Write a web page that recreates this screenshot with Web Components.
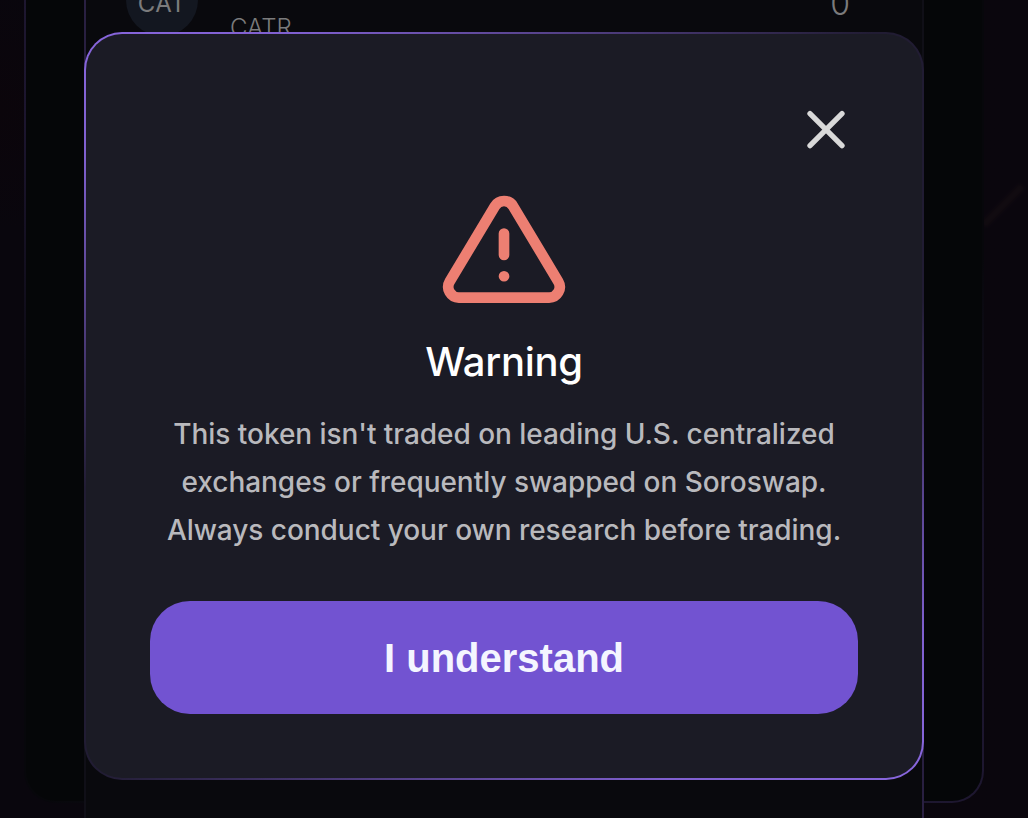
<!DOCTYPE html>
<html lang="en">
<head>
<meta charset="utf-8">
<title>Token warning</title>
<style>
html,body{margin:0;height:100%;overflow:hidden;background:#09060d}
body{font-family:Inter,"Liberation Sans",sans-serif}
</style>
</head>
<body>
<app-shell>
  <swap-panel slot="page">
    <token-row symbol="CAT" code="CATR" balance="0"></token-row>
  </swap-panel>
  <warning-modal slot="modal">
    <warning-icon slot="icon"></warning-icon>
    <span slot="title">Warning</span>
    <span slot="text">This token isn't traded on leading U.S. centralized<br>exchanges or frequently swapped on Soroswap.<br>Always conduct your own research before trading.</span>
    <primary-button slot="action">I understand</primary-button>
  </warning-modal>
</app-shell>
<script>
const define = (name, html) => {
  customElements.define(name, class extends HTMLElement {
    constructor() {
      super();
      const root = this.attachShadow({ mode: 'open' });
      root.innerHTML = html;
    }
    connectedCallback() {
      this.shadowRoot.querySelectorAll('[data-attr]').forEach(n => {
        n.textContent = this.getAttribute(n.dataset.attr);
      });
    }
  });
};

define('app-shell', `
<style>
:host{display:block;position:relative;width:1028px;height:818px;overflow:hidden;
  background:radial-gradient(circle at 0 110px,#0b050b 0,transparent 120px),linear-gradient(90deg,#09060d,#0a060d)}
.overlay{position:absolute;inset:0;display:flex;justify-content:center;align-items:flex-start;padding:32px 20px 0 0;box-sizing:border-box}
.streak{position:absolute;left:976px;top:202px;width:54px;height:7px;background:#110b10;transform:rotate(-45deg);filter:blur(1.5px)}
</style>
<div class="streak"></div>
<slot name="page"></slot>
<div class="overlay"><slot name="modal"></slot></div>`);

define('swap-panel', `
<style>
:host{display:block;position:relative}
.outer{box-sizing:border-box;width:960px;height:843px;margin:-40px 0 0 24px;padding:0 58px;border-radius:32px;border:2px solid transparent;
  background:linear-gradient(#050608,#050608) padding-box,linear-gradient(150deg,#1e1730 0%,#1c152e 12%,#07070b 36%,#07070b 61%,#19142a 80%,#1e1730 100%) border-box}
.inner{box-sizing:border-box;width:840px;height:900px;border:2px solid transparent;
  background:linear-gradient(#09090d,#09090d) padding-box,linear-gradient(150deg,#2b2144 0%,#261d3c 12%,#100f17 36%,#100f17 70%,#261d3c 88%,#2b2144 100%) border-box}
</style>
<div class="outer"><div class="inner"><slot></slot></div></div>`);

define('token-row', `
<style>
:host{display:flex;align-items:flex-start;padding:0 72px 0 40px;color:#7b7b7c}
.logo{box-sizing:border-box;width:72px;height:72px;border-radius:50%;background:#131720;display:flex;align-items:center;justify-content:center;padding-top:6px;font-size:24px;letter-spacing:.4px}
.code{margin:48px 0 0 32px;font-size:24px;line-height:32px;font-weight:300}
.bal{margin:20px 0 0 auto;font-size:32px;line-height:40px;font-weight:300}
</style>
<div class="logo" data-attr="symbol"></div><div class="code" data-attr="code"></div><div class="bal" data-attr="balance"></div>`);

define('warning-icon', `
<style>:host{display:block;width:128px;height:128px}svg{display:block}</style>
<svg width="128" height="128" viewBox="0 0.08 24 24" fill="none" stroke="#ed7f72" stroke-width="2" stroke-linecap="round" stroke-linejoin="round">
<path d="M10.29 3.86 1.82 18a2 2 0 0 0 1.71 3h16.94a2 2 0 0 0 1.71-3L13.71 3.86a2 2 0 0 0-3.42 0z"/><path d="M12 9v4M12 17h.01"/></svg>`);

define('close-icon', `
<style>:host{display:block;width:64px;height:64px}svg{display:block}</style>
<svg width="64" height="64" viewBox="0 0.15 24 24" fill="none" stroke="#d9d9d9" stroke-width="2" stroke-linecap="round"><path d="M18 6 6 18M6 6l12 12"/></svg>`);

define('primary-button', `
<style>
:host{display:block}
button{display:flex;align-items:center;justify-content:center;width:708px;height:113px;padding:0;border:0;border-radius:40px;background:#7253d1;color:#f4f5ff;
  font:bold 40px/46px "Liberation Sans",Arial,sans-serif}
</style>
<button><slot></slot></button>`);

define('warning-modal', `
<style>
:host{box-sizing:border-box;width:840px;height:748px;display:flex;flex-direction:column;align-items:center;padding:64px;border:2px solid transparent;border-radius:38px;
  background:linear-gradient(#1b1b25,#1b1b25) padding-box,linear-gradient(150deg,#8866dd 0%,#8060d0 10%,#211c33 37%,#211c33 61%,#8060d0 88%,#8866dd 100%) border-box}
close-icon{align-self:flex-end}
.icon{margin-top:24px}
h1{margin:24px 0 0;font-size:40px;line-height:48px;font-weight:500;letter-spacing:-.28px;color:#fff}
p{margin:24px 0 0;font-size:28px;line-height:48px;font-weight:500;letter-spacing:-.04px;color:#b9b9bd;text-align:center;white-space:nowrap}
.action{margin-top:auto}
</style>
<close-icon></close-icon>
<div class="icon"><slot name="icon"></slot></div>
<h1><slot name="title"></slot></h1>
<p><slot name="text"></slot></p>
<div class="action"><slot name="action"></slot></div>`);
</script>
</body>
</html>
